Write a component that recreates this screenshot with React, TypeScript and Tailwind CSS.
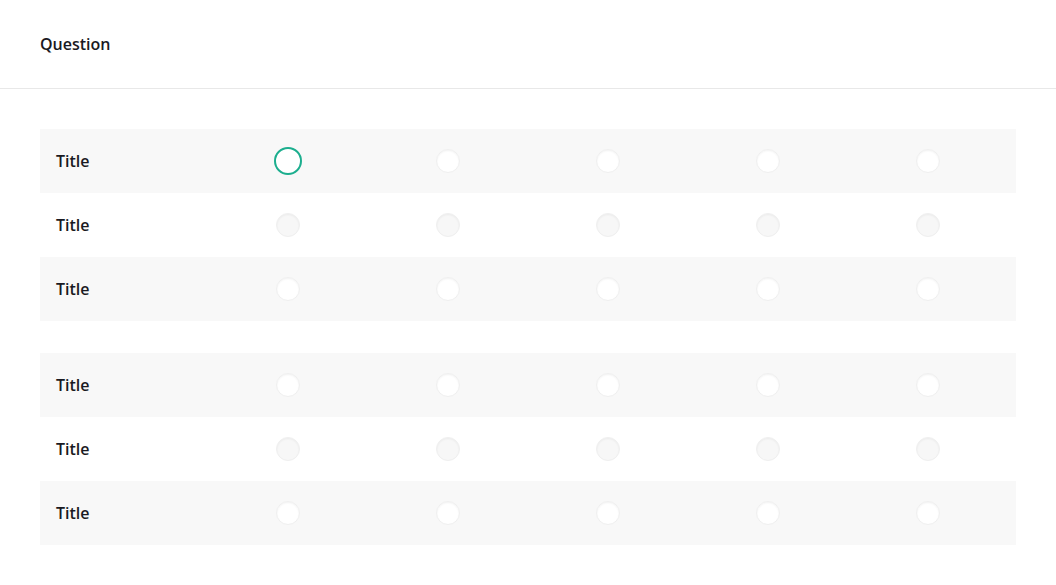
import { useState } from 'react';

const groups = [
  ['r1', 'r2', 'r3'],
  ['r4', 'r5', 'r6'],
];
const columns = [0, 1, 2, 3, 4];

export default function App() {
  const [selected, setSelected] = useState<Record<string, number>>({ r1: 0 });

  return (
    <div className="w-[1056px] h-[585px] bg-white text-[#1a1a22] font-['Open_Sans',sans-serif]">
      {/* Header */}
      <div className="h-[89px] border-b border-[#e8e8e8] flex items-center px-10">
        <span className="text-[16px] font-semibold">Question</span>
      </div>

      {/* Matrix */}
      <div className="px-10 pt-10 flex flex-col gap-8">
        {groups.map((rows, g) => (
          <div key={g} className="flex flex-col">
            {rows.map((id, i) => {
              const striped = i % 2 === 0;
              return (
                <div
                  key={id}
                  className={`h-16 grid grid-cols-[168px_repeat(5,160px)_1fr] items-center ${striped ? 'bg-[#f8f8f8]' : 'bg-white'}`}
                >
                  <span className="pl-4 text-[16px] font-semibold">Title</span>
                  {columns.map((c) => {
                    const isOn = selected[id] === c;
                    return (
                      <div key={c} className="flex justify-center">
                        <button
                          onClick={() => setSelected((prev) => ({ ...prev, [id]: c }))}
                          className={
                            isOn
                              ? 'w-[28px] h-[28px] rounded-full border-2 border-[#1cae8e] bg-white'
                              : `w-6 h-6 rounded-full border border-[#efefef] shadow-[inset_0_1px_2px_rgba(0,0,0,0.05)] ${striped ? 'bg-white' : 'bg-[#f7f7f7]'}`
                          }
                        />
                      </div>
                    );
                  })}
                  <div />
                </div>
              );
            })}
          </div>
        ))}
      </div>
    </div>
  );
}
